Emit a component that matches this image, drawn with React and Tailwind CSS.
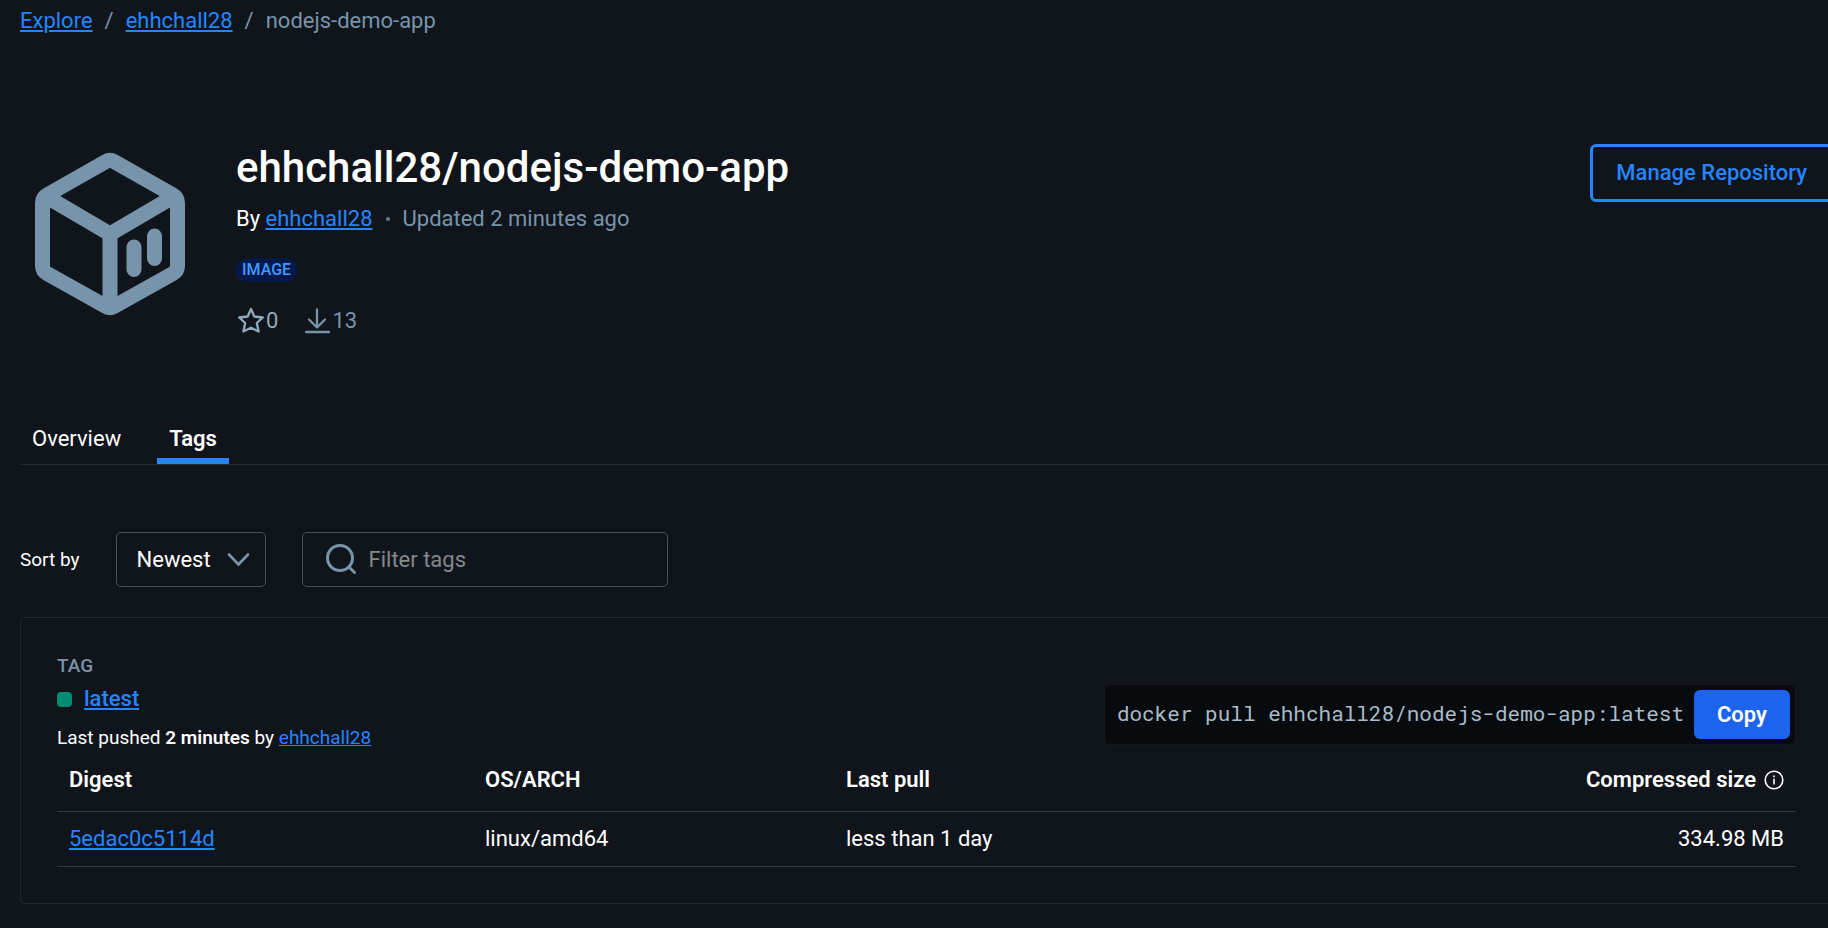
function PackageLogo() {
  return (
    <svg className="mt-2 h-[164px] w-[150px] shrink-0" viewBox="0 0 150 164" fill="none" stroke="#7794ab" strokeWidth="15" strokeLinejoin="round" strokeLinecap="round" aria-hidden="true">
      <path d="M71 9.500Q75 7.200 79 9.500L138 43Q142.500 45.500 142.500 51V114Q142.500 119 138 121.500L79 154.500Q75 156.800 71 154.500L12 121.500Q7.500 119 7.500 114V51Q7.500 45.500 12 43Z" />
      <path d="M12 45L75 82L138 45M75 82V152" />
      <path d="M99 95V117.500M119.500 84V106.500" />
    </svg>
  );
}

function StarIcon() {
  return (
    <svg className="h-[30px] w-[30px]" viewBox="0 0 30 30" fill="none" stroke="currentColor" strokeWidth="2.300" strokeLinejoin="round" aria-hidden="true">
      <path d="M15 3L18.300 10.500L26.800 11.500L20.800 17L22.600 25.500L15 21.700L7.400 25.500L9.200 17L3.200 11.500L11.700 10.500Z" />
    </svg>
  );
}

function DownloadIcon() {
  return (
    <svg className="h-[30px] w-[30px]" viewBox="0 0 30 30" fill="none" stroke="currentColor" strokeWidth="2.300" strokeLinejoin="round" strokeLinecap="round" aria-hidden="true">
      <path d="M15 3.500V21M7 13.500L15 21.500L23 13.500M4 26H27" />
    </svg>
  );
}

const linkClass = "text-[#2684ff] underline";

export default function App() {
  return (
    <div className="min-h-screen overflow-x-hidden bg-[#10151b] font-[Roboto,sans-serif] text-[22px] leading-7 text-white">
      <div className="-mr-[5px] pl-5">
        <nav aria-label="Breadcrumb" className="flex gap-3 pt-[7px] text-[#7794ab]">
          <a href="#explore" className={linkClass}>Explore</a>
          <span>/</span>
          <a href="#owner" className={linkClass}>ehhchall28</a>
          <span>/</span>
          <span>nodejs-demo-app</span>
        </nav>

        <header className="flex items-start pt-[109px]">
          <div className="flex grow gap-[51px] pl-[15px]">
            <PackageLogo />
            <div>
              <h1 className="text-[42px] leading-[48px] font-medium">ehhchall28/nodejs-demo-app</h1>
              <p className="mt-[13px] flex">
                <span>By <a href="#owner" className={linkClass}>ehhchall28</a></span>
                <span className="mx-[13px] mt-3 h-1 w-1 rounded-full bg-[#5f7a90]" />
                <span className="text-[#7794ab]">Updated 2 minutes ago</span>
              </p>
              <span className="mt-[25px] flex w-fit rounded-full bg-[#03194a] px-[6px] text-base leading-6 font-medium text-[#3f9bff]">IMAGE</span>
              <div className="mt-6 flex items-center gap-6 text-[#8fa9bd]">
                <span className="flex items-center"><StarIcon />0</span>
                <span className="flex items-center text-[#7794ab]"><DownloadIcon />13</span>
              </div>
            </div>
          </div>
          <button className="h-[58px] rounded-md border-3 border-[#2684ff] px-[23px] font-medium text-[#2684ff]">Manage Repository</button>
        </header>

        <div role="tablist" className="mt-[89px] flex gap-6 border-b border-[#1f2a31]">
          <button role="tab" aria-selected="false" className="border-b-6 border-transparent px-3 pb-[5px]">Overview</button>
          <button role="tab" aria-selected="true" className="border-b-6 border-[#2684ff] px-3 pb-[5px] font-semibold">Tags</button>
        </div>

        <div className="mt-[67px] flex items-center gap-9">
          <label htmlFor="sort" className="text-[19px]">Sort by</label>
          <div className="relative">
            <select id="sort" className="h-[55px] w-[150px] appearance-none rounded-[5px] border border-[#4d5154] bg-transparent pl-5">
              <option>Newest</option>
            </select>
            <svg className="pointer-events-none absolute top-[20px] right-4 h-4 w-[23px]" viewBox="0 0 23 16" fill="none" stroke="#7794ab" strokeWidth="2.600" strokeLinecap="round" strokeLinejoin="round" aria-hidden="true">
              <path d="M2 2.500L11.500 12.500L21 2.500" />
            </svg>
          </div>
          <label className="flex h-[55px] w-[366px] items-center gap-3 rounded-[5px] border border-[#4d5154] px-[22px]">
            <svg className="h-8 w-8 shrink-0" viewBox="0 0 32 32" fill="none" stroke="#7794ab" strokeWidth="3" strokeLinecap="round" aria-hidden="true">
              <circle cx="15" cy="14" r="12.500" />
              <path d="M24 23L29.500 28.500" />
            </svg>
            <input aria-label="Filter tags" placeholder="Filter tags" className="w-full bg-transparent outline-none placeholder:text-[#84888b]" />
          </label>
        </div>

        <section className="mt-[30px] rounded border border-[#1f262d] px-9 pt-[34px] pb-9">
          <div className="flex items-start justify-between">
            <div>
              <p className="text-[19px] leading-7 font-medium text-[#7794ab]">TAG</p>
              <p className="mt-[5px] flex items-center gap-3">
                <span className="h-[15px] w-[15px] rounded bg-[#058a75]" />
                <a href="#latest" className="font-medium text-[#2684ff] underline">latest</a>
              </p>
              <p className="mt-[11px] text-[19px] leading-7">
                Last pushed <strong className="font-semibold">2 minutes</strong> by <a href="#owner" className={linkClass}>ehhchall28</a>
              </p>
            </div>
            <div className="mt-8 flex h-[61px] items-center gap-[10px] rounded-md border border-[#14191c] bg-[#070b0d] pr-[5px] pl-3">
              <code className="pb-1 font-['Roboto_Mono','Liberation_Mono',monospace] text-[21px] whitespace-nowrap text-[#a9bccb]">docker pull ehhchall28/nodejs-demo-app:latest</code>
              <button className="h-[49px] w-24 rounded-md bg-[#1d63ed] font-semibold">Copy</button>
            </div>
          </div>

          <table className="w-full table-fixed text-left">
            <thead>
              <tr className="h-[59px] border-b border-[#2b3b47]">
                <th className="w-[416px] px-3 pb-[3px] font-semibold">Digest</th>
                <th className="w-[361px] px-3 pb-[3px] font-semibold">OS/ARCH</th>
                <th className="px-3 pb-[3px] font-semibold">Last pull</th>
                <th className="px-3 pb-[3px] font-semibold">
                  <span className="flex items-center justify-end gap-2">
                    Compressed size
                    <svg className="h-5 w-5" viewBox="0 0 20 20" fill="none" stroke="currentColor" strokeWidth="1.600" aria-hidden="true">
                      <circle cx="10" cy="10" r="8.800" />
                      <path d="M10 8.800V14.500M10 5.500V7.300" />
                    </svg>
                  </span>
                </th>
              </tr>
            </thead>
            <tbody>
              <tr className="h-[55px] border-b border-[#2b3b47]">
                <td className="px-3"><a href="#digest" className={linkClass}>5edac0c5114d</a></td>
                <td className="px-3">linux/amd64</td>
                <td className="px-3">less than 1 day</td>
                <td className="px-3 text-right">334.98 MB</td>
              </tr>
            </tbody>
          </table>
        </section>
      </div>
    </div>
  );
}
